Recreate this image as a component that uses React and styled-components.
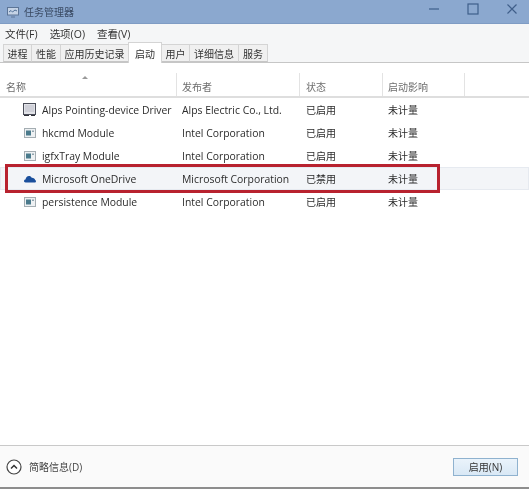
import React from 'react';
import styled, { createGlobalStyle } from 'styled-components';

const GlobalStyle = createGlobalStyle`
  html, body {
    margin: 0;
    padding: 0;
    background: #fff;
  }
  body {
    font-family: "Open Sans", "Noto Sans CJK SC", sans-serif;
    color: #333;
  }
`;

const Window = styled.div`
  width: 529px;
  height: 489px;
  display: flex;
  flex-direction: column;
  overflow: hidden;
  background: #fff;
  filter: blur(0.3px);
`;

const TitleBar = styled.div`
  height: 24px;
  flex: none;
  display: flex;
  align-items: center;
  padding-left: 7px;
  background: #8ba8cf;
  border-bottom: 1px solid #7f9cc4;
  box-sizing: border-box;
`;

const TitleText = styled.span`
  margin-left: 5px;
  font-size: 10px;
  color: #3a4a63;
`;

const WindowButtons = styled.div`
  margin-left: auto;
  align-self: flex-start;
  display: flex;
  gap: 27px;
  padding: 3px 11px 0 0;
`;

const MenuBar = styled.div`
  height: 18px;
  flex: none;
  display: flex;
  align-items: center;
  gap: 12px;
  padding-left: 5px;
  background: #f5f6f7;
  font-size: 10.5px;
  color: #333;
`;

const TabBar = styled.div`
  height: 21px;
  flex: none;
  display: flex;
  align-items: flex-end;
  padding-left: 4px;
  background: #f5f6f7;
  border-bottom: 1px solid #c6c6c6;
  box-sizing: border-box;
`;

const Tab = styled.div`
  width: ${p => p.$w}px;
  height: ${p => (p.$active ? 21 : 18)}px;
  display: flex;
  align-items: center;
  justify-content: center;
  box-sizing: border-box;
  font-size: 10px;
  color: #333;
  background: ${p => (p.$active ? '#fff' : '#f0f0f0')};
  border: 1px solid #d4d4d4;
  border-bottom: ${p => (p.$active ? '0' : '1px solid #c6c6c6')};
  margin-left: -1px;
  margin-bottom: ${p => (p.$active ? '-1px' : '0')};
  position: relative;
  z-index: ${p => (p.$active ? 1 : 0)};
`;

const COLUMNS = '177px 123px 83px 82px 64px';

const HeaderRow = styled.div`
  height: 35px;
  flex: none;
  display: grid;
  grid-template-columns: ${COLUMNS};
  border-bottom: 2px solid #dedede;
  box-sizing: border-box;
`;

const HeaderCell = styled.div`
  position: relative;
  display: flex;
  align-items: flex-end;
  padding: 0 0 2px ${p => p.$pad || 6}px;
  margin-top: 10px;
  font-size: 10px;
  color: #6e6e6e;
  border-right: ${p => (p.$plain ? '0' : '1px solid #e3e3e3')};
`;

const SortArrow = styled.span`
  position: absolute;
  left: 82px;
  top: 3px;
  width: 0;
  height: 0;
  border-left: 3px solid transparent;
  border-right: 3px solid transparent;
  border-bottom: 3px solid #999;
`;

const Rows = styled.div`
  flex: 1;
`;

const Row = styled.div`
  position: relative;
  height: 23px;
  display: grid;
  grid-template-columns: ${COLUMNS};
  align-items: center;
  font-size: 10.4px;
  color: #2c2c2c;
  background: ${p => (p.$selected ? '#f3f5f8' : 'transparent')};
  box-shadow: ${p => (p.$selected ? 'inset 0 0 0 1px #e6eaf0' : 'none')};
`;

const NameCell = styled.div`
  display: flex;
  align-items: center;
  gap: 6px;
  padding-left: 23px;
  white-space: nowrap;
`;

const IconBox = styled.span`
  width: 13px;
  height: 13px;
  flex: none;
  display: flex;
  align-items: center;
  justify-content: center;
`;

const Cell = styled.div`
  padding-left: ${p => p.$pad || 6}px;
  font-size: ${p => (p.$cjk ? '10px' : 'inherit')};
  white-space: nowrap;
`;

const Highlight = styled.div`
  position: absolute;
  left: 5px;
  top: -3px;
  width: 429px;
  height: 23px;
  border: 3px solid #b8222f;
  pointer-events: none;
`;

const Footer = styled.div`
  height: 44px;
  flex: none;
  display: flex;
  align-items: center;
  justify-content: space-between;
  padding: 0 11px 0 6px;
  background: #fafafa;
  border-top: 1px solid #c9c9c9;
  border-bottom: 2px solid #8d8d8d;
  box-sizing: border-box;
`;

const Collapse = styled.div`
  display: flex;
  align-items: center;
  gap: 7px;
  font-size: 10px;
  color: #444;
`;

const EnableButton = styled.button`
  width: 65px;
  height: 18px;
  padding: 0;
  font: inherit;
  font-size: 10px;
  color: #333;
  background: linear-gradient(#eaf3fb, #d9e8f5);
  border: 1px solid #8fb2cf;
`;

const AppIcon = () => (
  <svg width="12" height="10" viewBox="0 0 12 10">
    <rect x="0.5" y="0.5" width="11" height="9" fill="#eef1f3" stroke="#a4adb2" />
    <rect x="2" y="2.5" width="5" height="5" fill="#4a7a8c" />
    <rect x="8" y="2.5" width="2" height="1.5" fill="#8fa3ad" />
  </svg>
);

const TouchpadIcon = () => (
  <svg width="13" height="13" viewBox="0 0 13 13">
    <rect x="0.5" y="0.5" width="12" height="11" fill="#e2e3e8" stroke="#4a4d58" />
    <rect x="2" y="2" width="9" height="7" fill="#cfd0d8" />
    <path d="M1 12.5h5M8 12.5h4" stroke="#30323a" />
  </svg>
);

const OneDriveIcon = () => (
  <svg width="12" height="12" viewBox="0 0 12 12">
    <path d="M1.6 9.5C.4 9.5 0 8.6 0 8c0-.9.7-1.5 1.5-1.5C1.8 4.8 3 3 5 3c1.2 0 2.2.7 2.7 1.7C9.6 4.6 11 5.7 11.2 7c.5.2.8.7.8 1.2 0 .8-.6 1.3-1.3 1.3z" fill="#1a4f9c" />
  </svg>
);

const rows = [
  { name: 'Alps Pointing-device Driver', icon: <TouchpadIcon />, publisher: 'Alps Electric Co., Ltd.', status: '已启用' },
  { name: 'hkcmd Module', icon: <AppIcon />, publisher: 'Intel Corporation', status: '已启用' },
  { name: 'igfxTray Module', icon: <AppIcon />, publisher: 'Intel Corporation', status: '已启用' },
  { name: 'Microsoft OneDrive', icon: <OneDriveIcon />, publisher: 'Microsoft Corporation', status: '已禁用', selected: true },
  { name: 'persistence Module', icon: <AppIcon />, publisher: 'Intel Corporation', status: '已启用' },
];

const tabs = [
  { label: '进程', w: 29 },
  { label: '性能', w: 30 },
  { label: '应用历史记录', w: 69 },
  { label: '启动', w: 34, active: true },
  { label: '用户', w: 29 },
  { label: '详细信息', w: 50 },
  { label: '服务', w: 30 },
];

export default function App() {
  return (
    <Window>
      <GlobalStyle />
      <TitleBar>
        <svg width="12" height="12" viewBox="0 0 12 12">
          <rect x="0.5" y="1.5" width="11" height="7.5" fill="#c5d3e6" stroke="#5c7597" />
          <path d="M2 6l2-1.5 1.5 1.5L8 4l2 1" fill="none" stroke="#4f6f96" />
          <path d="M4 11h4" stroke="#5c7597" />
        </svg>
        <TitleText>任务管理器</TitleText>
        <WindowButtons>
          <svg width="12" height="12" viewBox="0 0 12 12"><path d="M1 6h10" stroke="#3f5f8a" strokeWidth="1.2" /></svg>
          <svg width="12" height="12" viewBox="0 0 12 12"><rect x="1" y="1" width="10" height="10" fill="none" stroke="#3f5f8a" strokeWidth="1.2" /></svg>
          <svg width="12" height="12" viewBox="0 0 12 12"><path d="M1.5 1.5l9 9M10.5 1.5l-9 9" stroke="#3f5f8a" strokeWidth="1.2" /></svg>
        </WindowButtons>
      </TitleBar>
      <MenuBar>
        <span>文件(F)</span>
        <span>选项(O)</span>
        <span>查看(V)</span>
      </MenuBar>
      <TabBar>
        {tabs.map(t => (
          <Tab key={t.label} $w={t.w} $active={t.active}>{t.label}</Tab>
        ))}
      </TabBar>
      <HeaderRow>
        <HeaderCell>名称<SortArrow /></HeaderCell>
        <HeaderCell $pad={5}>发布者</HeaderCell>
        <HeaderCell>状态</HeaderCell>
        <HeaderCell $pad={5}>启动影响</HeaderCell>
        <HeaderCell $plain />
      </HeaderRow>
      <Rows>
        {rows.map(r => (
          <Row key={r.name} $selected={r.selected}>
            <NameCell><IconBox>{r.icon}</IconBox>{r.name}</NameCell>
            <Cell $pad={5}>{r.publisher}</Cell>
            <Cell $cjk>{r.status}</Cell>
            <Cell $cjk $pad={5}>未计量</Cell>
            {r.selected && <Highlight />}
          </Row>
        ))}
      </Rows>
      <Footer>
        <Collapse>
          <svg width="16" height="16" viewBox="0 0 16 16">
            <circle cx="8" cy="8" r="7" fill="#fff" stroke="#444" strokeWidth="1.2" />
            <path d="M5 9.5L8 6.5l3 3" fill="none" stroke="#333" strokeWidth="1.5" />
          </svg>
          简略信息(D)
        </Collapse>
        <EnableButton>启用(N)</EnableButton>
      </Footer>
    </Window>
  );
}
